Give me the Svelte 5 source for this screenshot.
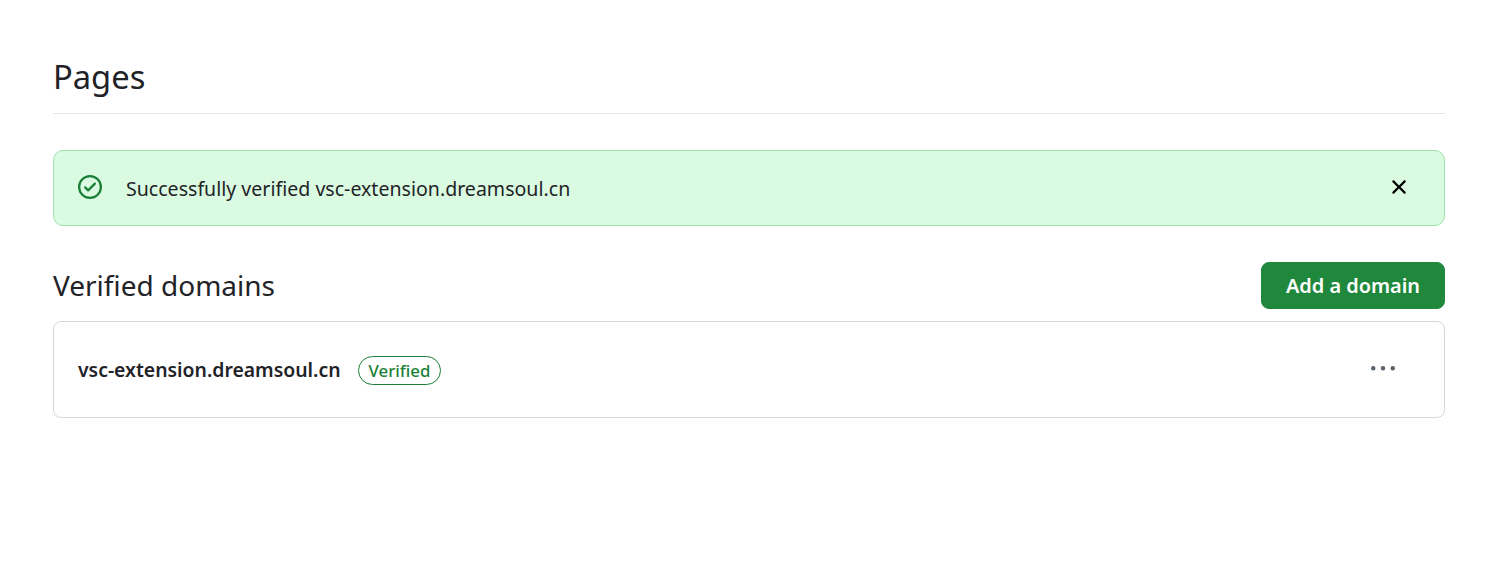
<script>
  let domains = [{ name: 'vsc-extension.dreamsoul.cn', status: 'Verified' }];
</script>

<main class="page">
  <header class="page-head">
    <h1>Pages</h1>
  </header>

  <div class="flash">
    <svg class="flash-icon" viewBox="0 0 16 16" width="24" height="24" aria-hidden="true">
      <path d="M0 8a8 8 0 1 1 16 0A8 8 0 0 1 0 8Zm1.5 0a6.5 6.5 0 1 0 13 0 6.5 6.5 0 0 0-13 0Zm10.28-1.72-4.5 4.5a.75.75 0 0 1-1.06 0l-2-2a.751.751 0 0 1 .018-1.042.751.751 0 0 1 1.042-.018l1.47 1.47 3.97-3.97a.751.751 0 0 1 1.042.018.751.751 0 0 1 .018 1.042Z" />
    </svg>
    <span class="flash-text">Successfully verified vsc-extension.dreamsoul.cn</span>
    <button class="flash-close" aria-label="Dismiss">
      <svg viewBox="0 0 16 16" width="24" height="24" aria-hidden="true">
        <path d="M3.72 3.72a.75.75 0 0 1 1.06 0L8 6.94l3.22-3.22a.749.749 0 0 1 1.275.326.749.749 0 0 1-.215.734L9.06 8l3.22 3.22a.749.749 0 0 1-.326 1.275.749.749 0 0 1-.734-.215L8 9.06l-3.22 3.22a.751.751 0 0 1-1.042-.018.751.751 0 0 1-.018-1.042L6.94 8 3.72 4.78a.75.75 0 0 1 0-1.06Z" />
      </svg>
    </button>
  </div>

  <div class="section-head">
    <h2>Verified domains</h2>
    <button class="btn-primary">Add a domain</button>
  </div>

  <div class="box">
    {#each domains as domain}
      <div class="row">
        <span class="domain">{domain.name}</span>
        <span class="label">{domain.status}</span>
        <button class="more" aria-label="Show options">
          <svg viewBox="0 0 16 16" width="24" height="24" aria-hidden="true">
            <path d="M8 9a1.5 1.5 0 1 0 0-3 1.5 1.5 0 0 0 0 3ZM1.5 9a1.5 1.5 0 1 0 0-3 1.5 1.5 0 0 0 0 3Zm13 0a1.5 1.5 0 1 0 0-3 1.5 1.5 0 0 0 0 3Z" />
          </svg>
        </button>
      </div>
    {/each}
  </div>
</main>

<style>
  :global(body) {
    background: #fff;
    color: #1f2328;
    font-family: "Noto Sans", "Open Sans", sans-serif;
  }

  .page {
    padding: 50px 53px 0;
    height: 526px;
  }

  .page-head {
    height: 63px;
    border-bottom: 1px solid #e4e6e9;
    margin-bottom: 36px;
  }

  h1 {
    margin: 0;
    font-size: 32.7px;
    line-height: 54px;
    font-weight: 400;
  }

  .flash {
    display: flex;
    align-items: center;
    height: 76px;
    box-sizing: border-box;
    padding: 0 24px;
    background: #dafbe1;
    border: 1px solid #9fe3ae;
    border-radius: 10px;
  }

  .flash-icon {
    fill: #1a7f37;
    margin-right: 24px;
    margin-top: -3px;
  }

  .flash-text {
    flex: 1;
    font-size: 19.57px;
    padding-top: 1px;
  }

  .flash-close {
    display: flex;
    padding: 0;
    border: 0;
    background: none;
    fill: #000;
    margin-right: 9px;
    margin-top: -3px;
  }

  .section-head {
    display: flex;
    align-items: center;
    justify-content: space-between;
    margin-top: 36px;
    margin-bottom: 12px;
  }

  h2 {
    margin: 0 0 2px;
    font-size: 28px;
    font-weight: 400;
  }

  .btn-primary {
    width: 184px;
    height: 47px;
    padding: 0;
    border: 1px solid #1f883d;
    border-radius: 8px;
    background: #1f883d;
    color: #fff;
    font: 600 19.9px "Noto Sans", "Open Sans", sans-serif;
  }

  .box {
    border: 1px solid #d1d9e0;
    border-radius: 8px;
  }

  .row {
    display: flex;
    align-items: center;
    height: 95px;
    padding: 0 24px;
  }

  .domain {
    font-size: 19.4px;
    font-weight: 600;
  }

  .label {
    margin-left: 17px;
    margin-top: 2px;
    padding: 0 10px;
    width: 83px;
    height: 29px;
    line-height: 27px;
    box-sizing: border-box;
    border: 1px solid #1a7f37;
    border-radius: 15px;
    color: #1a7f37;
    font-size: 16.8px;
    font-weight: 500;
    white-space: nowrap;
  }

  .more {
    display: flex;
    margin-left: auto;
    padding: 0;
    border: 0;
    background: none;
    fill: #59636e;
    margin-right: 25px;
    margin-top: -1px;
  }
</style>
